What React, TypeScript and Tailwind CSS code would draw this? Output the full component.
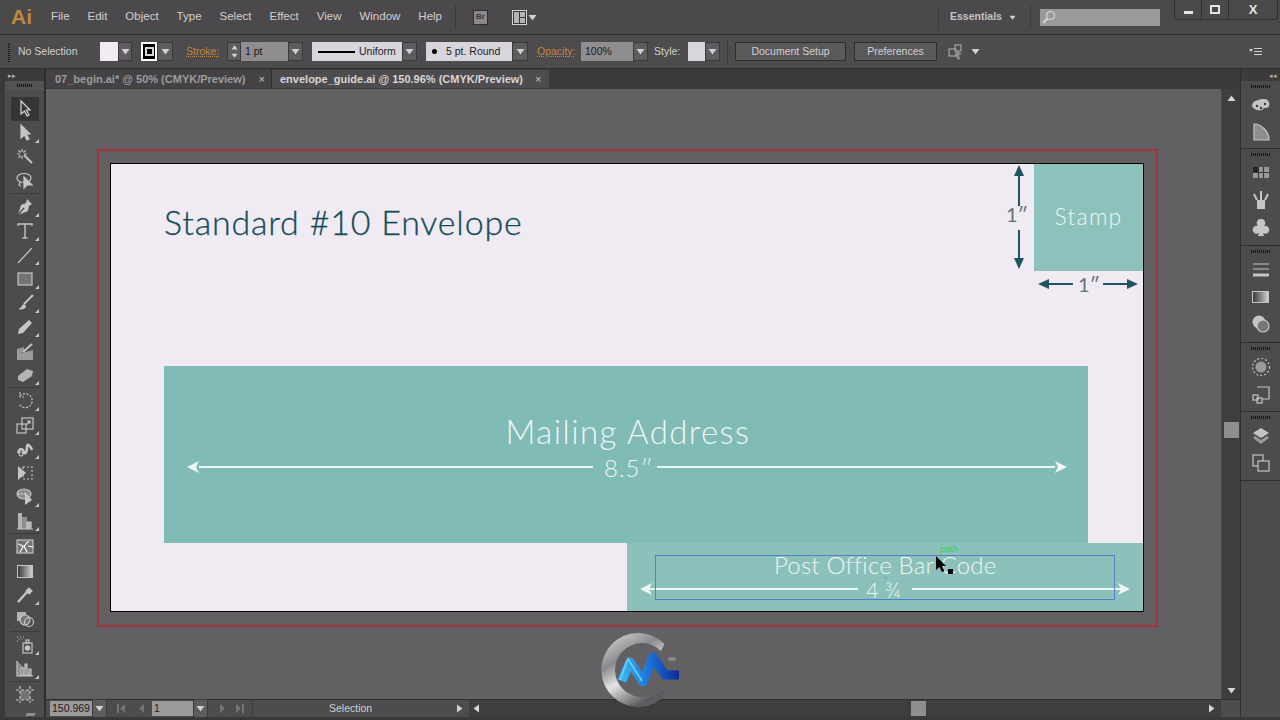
import { ReactNode } from "react";

const Caret = ({ className = "" }: { className?: string }) => (
  <svg width="9" height="7" viewBox="0 0 9 7" className={className}>
    <path d="M0.5 1h8L4.5 6.5z" fill="currentColor" />
  </svg>
);

const DropBtn = ({ className = "w-[15px]" }: { className?: string }) => (
  <div className={`flex h-[19px] shrink-0 items-center justify-center border border-[#3a383a] bg-[#5e5c5e] text-[#d0ced0] ${className}`}>
    <Caret />
  </div>
);

const Grip = () => (
  <div className="h-[3px] w-5 bg-[repeating-linear-gradient(90deg,#161516_0_1px,transparent_1px_2px)]" />
);

const menus = ["File", "Edit", "Object", "Type", "Select", "Effect", "View", "Window", "Help"];

const TitleBar = () => (
  <div className="flex h-[35px] shrink-0 items-center border-b border-[#2f2e2f] bg-[#4b494b] text-[11.5px] text-[#d2d0d2]">
    <div className="ml-[11px] w-[41px] text-[21px] font-bold text-[#c08a3e]">Ai</div>
    <div className="-ml-px flex gap-[18px]">
      {menus.map((m) => (
        <span key={m}>{m}</span>
      ))}
    </div>
    <div className="ml-[13px] h-6 w-px bg-[#3c3a3c]" />
    <div className="ml-[17px] flex h-[15px] w-[15px] items-center justify-center border border-[#2f2e2f] bg-[#8b898b] text-[8px] font-bold text-[#3a383a]">
      Br
    </div>
    <div className="ml-[24px] flex items-center gap-[1px] text-[#d2d0d2]">
      <svg width="15" height="15" viewBox="0 0 15 15">
        <rect x="0.5" y="0.5" width="14" height="14" fill="#3a383a" stroke="#d2d0d2" />
        <rect x="2" y="2" width="5" height="11" fill="#b5b3b5" />
        <rect x="8" y="2" width="5" height="5" fill="#b5b3b5" />
        <rect x="8" y="8" width="5" height="5" fill="#b5b3b5" />
      </svg>
      <Caret />
    </div>
    <div className="ml-auto h-6 w-px bg-[#3c3a3c]" />
    <span className="ml-[11px] w-[51px] whitespace-nowrap text-[10.5px] font-bold text-[#c4c2c4]">Essentials</span>
    <Caret className="ml-[7px] scale-75" />
    <div className="ml-[13px] h-6 w-px bg-[#3c3a3c]" />
    <div className="ml-[9px] flex h-[17px] w-[120px] items-center bg-[#9b999c] pl-[2px] text-[#d8d6d8]">
      <svg width="14" height="14" viewBox="0 0 14 14" fill="none" stroke="currentColor" strokeWidth="1.2">
        <circle cx="8.5" cy="5.5" r="4" />
        <path d="M5.5 8.5L1 13" strokeWidth="2" />
      </svg>
    </div>
    <div className="mb-auto ml-[14px] mr-[2px] flex h-[20px] w-[104px] items-center rounded-b border border-t-0 border-[#2f2e2f] text-[#e4e2e4]">
      <div className="flex h-full w-[27px] items-center justify-center border-r border-[#2f2e2f]">
        <div className="mt-[6px] h-[3px] w-[9px] bg-current" />
      </div>
      <div className="flex h-full w-[27px] items-center justify-center border-r border-[#2f2e2f]">
        <div className="h-[9px] w-[10px] border-2 border-current" />
      </div>
      <div className="flex-1 text-center text-[13px] font-bold leading-[18px]">X</div>
    </div>
  </div>
);

const ControlBar = () => (
  <div className="flex h-[34px] shrink-0 items-center border-b border-[#2f2e2f] bg-[#4d4b4d] text-[10.5px] text-[#d2d0d2]">
    <div className="ml-[8px] h-[20px] w-[2px] bg-[repeating-linear-gradient(0deg,#1b1a1b_0_1px,transparent_1px_2px)]" />
    <span className="ml-[8px] w-[57px] whitespace-nowrap">No Selection</span>
    <div className="ml-[25px] h-[19px] w-[18px] bg-[#f0eaf3]" />
    <DropBtn className="w-[14px]" />
    <div className="ml-[9px] flex h-[19px] w-[16px] items-center justify-center border-2 border-white bg-black">
      <div className="h-[9px] w-[9px] border-2 border-[#d8d6d8]" />
    </div>
    <DropBtn className="w-[16px]" />
    <span className="ml-[13px] w-[34px] text-[#c08a3e] underline decoration-dotted">Stroke:</span>
    <div className="ml-[7px] flex h-[19px] w-[14px] flex-col items-center justify-around border border-[#3a383a] bg-[#5e5c5e] text-[#d0ced0]">
      <Caret className="rotate-180 scale-75" />
      <Caret className="scale-75" />
    </div>
    <div className="flex h-[19px] w-[47px] items-center bg-[#8f8d90] pl-[4px] text-[#1c1b1c]">1 pt</div>
    <DropBtn />
    <div className="ml-[9px] flex h-[19px] w-[90px] items-center bg-[#d9d5dc] pl-[6px] text-[#1c1b1c]">
      <div className="h-[2px] w-[37px] bg-black" />
      <span className="ml-[4px]">Uniform</span>
    </div>
    <DropBtn />
    <div className="ml-[9px] flex h-[19px] w-[86px] items-center bg-[#d9d5dc] pl-[6px] text-[#1c1b1c]">
      <div className="h-[5px] w-[5px] rounded-full bg-black" />
      <span className="ml-[9px] whitespace-nowrap">5 pt. Round</span>
    </div>
    <DropBtn className="w-[16px]" />
    <span className="ml-[9px] w-[38px] text-[#c08a3e] underline decoration-dotted">Opacity:</span>
    <div className="ml-[6px] flex h-[19px] w-[52px] items-center bg-[#8f8d90] pl-[4px] text-[#1c1b1c]">100%</div>
    <DropBtn />
    <span className="ml-[6px] w-[26px]">Style:</span>
    <div className="ml-[8px] h-[19px] w-[17px] bg-[#d9d5dc]" />
    <DropBtn />
    <div className="ml-[7px] h-6 w-px bg-[#3c3a3c]" />
    <div className="ml-[7px] flex h-[19px] w-[111px] items-center justify-center border border-[#2f2e2f] bg-[#5a585a]">
      Document Setup
    </div>
    <div className="ml-[8px] flex h-[19px] w-[83px] items-center justify-center border border-[#2f2e2f] bg-[#5a585a]">
      Preferences
    </div>
    <svg width="16" height="16" viewBox="0 0 16 16" className="ml-[11px] text-[#b5b3b5]">
      <rect x="1" y="5" width="7" height="7" fill="none" stroke="currentColor" />
      <rect x="7" y="1" width="6" height="6" fill="none" stroke="currentColor" />
      <path d="M7 5l7 5-3 1 1 4-2 1-2-4z" fill="#8f8d90" />
    </svg>
    <Caret className="ml-[7px]" />
    <svg width="13" height="9" viewBox="0 0 13 9" className="ml-auto mr-[18px] text-[#d2d0d2]">
      <path d="M0 2h4L2 5z M5 1h8v1H5z M5 4h8v1H5z M5 7h8v1H5z" fill="currentColor" />
    </svg>
  </div>
);

const Ic = ({ children }: { children: ReactNode }) => (
  <svg width="20" height="20" viewBox="0 0 20 20" fill="none" stroke="#c6c4c6" strokeWidth="1.2">
    {children}
  </svg>
);

const toolIcons: { icon: ReactNode; corner?: boolean; sep?: boolean; active?: boolean }[] = [
  { active: true, icon: <path d="M6 2v13l3.5-3 2.5 5 2-1-2.5-5H15z" stroke="#d8d6d8" /> },
  { corner: true, icon: <path d="M6 2v13l3.5-3 2.5 5 2-1-2.5-5H15z" fill="#c6c4c6" /> },
  { icon: <><path d="M9 8l8 8" strokeWidth="2" /><path d="M7 2v3M7 9v3M2 7h3M9 7h3M3.5 3.5l2 2M10.5 3.5l-2 2M3.5 10.5l2-2" /></> },
  { sep: true, icon: <><ellipse cx="9" cy="7" rx="7" ry="4.5" /><path d="M9 6v11l3-3h5z" fill="#c6c4c6" /><path d="M5 11l-1 3 2 1" /></> },
  { corner: true, icon: <><path d="M12 2l5 5-3 2-1 5-10 4 3-10 5-2z" fill="#c6c4c6" stroke="none" /><path d="M3 18l6-7" stroke="#4d4b4d" /></> },
  { corner: true, icon: <path d="M3 5V3h14v2M10 3v14M7.5 17h5" strokeWidth="1.4" /> },
  { corner: true, icon: <path d="M3 18L17 3" /> },
  { corner: true, icon: <rect x="3" y="4" width="14" height="12" fill="#757375" stroke="#c6c4c6" /> },
  { corner: true, icon: <><path d="M18 2L9 11" strokeWidth="2" /><path d="M9 11c-2 0-2 4-6 5 4 1 8 0 8-3z" fill="#c6c4c6" stroke="none" /></> },
  { corner: true, icon: <path d="M14 3l3 3-9 10-5 1 1-5z" fill="#c6c4c6" stroke="none" /> },
  { icon: <><path d="M2 8l7-2v3l-3 3 8-2 4-1v10H2z" fill="#9b999b" stroke="none" /><path d="M8 11l9-8" strokeWidth="2" /></> },
  { sep: true, corner: true, icon: <path d="M3 11l9-7 6 2-1 5-9 6-5-2z" fill="#b5b3b5" stroke="none" /> },
  { corner: true, icon: <path d="M5 5a7 7 0 1 1-1 8M5 1v5h5" strokeDasharray="2 1.5" /> },
  { corner: true, icon: <><rect x="2" y="9" width="9" height="9" /><rect x="7" y="3" width="11" height="11" /><path d="M11 10l4-4M12 6h3v3" /></> },
  { corner: true, icon: <><path d="M3 14c2-6 5-4 6-1s3 0 3-5 4 0 5 3" strokeWidth="2.5" /><circle cx="6" cy="15" r="2" fill="#4d4b4d" /></> },
  { icon: <><path d="M3 3l8 7-8 7z" fill="#c6c4c6" stroke="none" /><rect x="8" y="4" width="9" height="12" strokeDasharray="2 2" /></> },
  { corner: true, icon: <><ellipse cx="9" cy="7" rx="7" ry="5" fill="#8f8d8f" /><path d="M3 7h9" strokeDasharray="1.5 1.5" stroke="#fff" /><path d="M10 5v13l7-5z" fill="#c6c4c6" stroke="none" /></> },
  { sep: true, corner: true, icon: <><path d="M3 2h4v16H3z" fill="#b5b3b5" stroke="none" /><path d="M7 6h5v12H7z" fill="#8f8d8f" stroke="none" /><path d="M12 11h4v7h-4zM2 18h16" fill="#b5b3b5" stroke="#c6c4c6" /></> },
  { icon: <><rect x="2" y="3" width="16" height="13" fill="#757375" /><path d="M3 7c4 0 3 3 6 2s2-5 5-4M9 9l3 6M13 9l5 1M5 15l3-5" stroke="#fff" /></> },
  { icon: null },
  { corner: true, icon: <><path d="M3 17l9-10" strokeWidth="2.5" stroke="#c6c4c6" /><path d="M11 6l3-3 3 3-3 3z" fill="#c6c4c6" /></> },
  { sep: true, icon: <><path d="M2 3h9v9H2z" fill="#b5b3b5" stroke="none" /><circle cx="10" cy="11" r="5" fill="#757375" /><circle cx="14" cy="13" r="4.5" /></> },
  { corner: true, icon: <><rect x="8" y="8" width="9" height="10" /><rect x="11" y="5" width="3" height="3" /><circle cx="12.5" cy="13" r="2.2" fill="#c6c4c6" /><path d="M2 2h1M5 2h1M8 2h1M3.5 4h1M6.5 4h1M2 6h1" /></> },
  { corner: true, sep: true, icon: <path d="M2 2v15h16M6 16V9h2v7zM10 16V5h2v11zM14 16v-6h2v6z" fill="#8f8d8f" /> },
  { icon: <><rect x="5" y="5" width="10" height="10" fill="#757375" stroke="none" /><path d="M5 1v17M15 1v17M1 5h18M1 15h18" strokeDasharray="3 2" /></> },
];

const ToolBar = () => (
  <div className="flex w-[46px] shrink-0 flex-col border-r-2 border-l-[5px] border-r-[#2f2e2f] border-l-[#3a383a] bg-[#4d4b4d]">
    <div className="flex h-[12px] items-center bg-[#3c3b3c] pl-[3px] text-[7px] leading-none text-[#b5b3b5]">▸▸</div>
    <div className="flex h-[9px] items-center justify-center bg-[#545254]">
      <div className="h-[3px] w-4 bg-[repeating-linear-gradient(90deg,#161516_0_1px,transparent_1px_2px)]" />
    </div>
    <div className="flex flex-col items-center pt-[7px]">
      {toolIcons.map((t, i) => (
        <div key={i} className="flex w-full flex-col items-center">
          <div className={`relative flex h-[24px] w-[28px] items-center justify-center ${t.active ? "bg-[#363436]" : ""}`}>
            {t.icon === null ? (
              <div className="h-[13px] w-[16px] border border-[#c6c4c6] bg-gradient-to-r from-[#3f3d3f] to-[#d0ced0]" />
            ) : (
              <Ic>{t.icon}</Ic>
            )}
            {t.corner && (
              <div className="absolute bottom-[2px] right-[0px] h-0 w-0 border-b-[4px] border-l-[4px] border-b-[#c6c4c6] border-l-transparent" />
            )}
          </div>
          {t.sep && <div className="mb-px h-px w-[30px] bg-[#3c3a3c]" />}
        </div>
      ))}
    </div>
    <div className="mb-px ml-[21px] mt-auto h-[3px] w-[9px] -skew-x-[30deg] bg-[#8f8d8f]" />
  </div>
);

const Tabs = () => (
  <div className="flex h-[20px] shrink-0 border-b border-[#3a383a] bg-[#3c3b3c] pt-px text-[11px] font-bold">
    <div className="flex w-[226px] items-center border-r border-[#2f2e2f] bg-[#444244] pl-[9px] text-[#9d9b9d]">
      <span className="whitespace-nowrap">07_begin.ai* @ 50% (CMYK/Preview)</span>
      <span className="ml-[13px] font-normal text-[#c4c2c4]">×</span>
    </div>
    <div className="flex w-[277px] items-center bg-[#4e4c4e] pl-[8px] text-[#d8d6d8]">
      <span className="whitespace-nowrap">envelope_guide.ai @ 150.96% (CMYK/Preview)</span>
      <span className="ml-[12px] font-normal text-[#c4c2c4]">×</span>
    </div>
  </div>
);

const ArrowH = ({ className, color, width }: { className: string; color: string; width: number }) => (
  <svg width={width} height="14" viewBox={`0 0 ${width} 14`} className={`absolute ${className}`}>
    <path d={`M0 7L12 1 9 7 12 13Z M${width} 7L${width - 12} 1 ${width - 9} 7 ${width - 12} 13Z`} fill={color} />
  </svg>
);

const Artboard = () => (
  <div className="relative h-[449px] w-[1034px] overflow-hidden border border-black bg-[#f0eaf3] font-['Lato',sans-serif] font-light">
    <div className="absolute left-[53px] top-[36px] whitespace-nowrap text-[34px] leading-[44px] tracking-[0.8px] text-[#154c5a] [-webkit-text-stroke:0.3px_#154c5a]">
      Standard #10 Envelope
    </div>

    {/* stamp */}
    <div className="absolute left-[923px] top-[-1px] flex h-[108px] w-[109px] items-center justify-center bg-[#8dc1bb] pb-[2px] text-[23px] tracking-[1.2px] text-[#eef6f4]">
      Stamp
    </div>
    <svg width="14" height="104" viewBox="0 0 14 104" className="absolute left-[901px] top-[1px]">
      <path d="M7 0L12 11H8V41H6V11H2Z M7 104L12 93H8V65H6V93H2Z" fill="#1f5563" />
    </svg>
    <div className="absolute left-[895px] top-[38px] text-[20px] font-normal leading-6 text-[#5f7478]">1″</div>
    <svg width="100" height="14" viewBox="0 0 100 14" className="absolute left-[927px] top-[113px]">
      <path d="M0 7L11 2V6H35V8H11V12Z M100 7L89 2V6H65V8H89V12Z" fill="#1f5563" />
    </svg>
    <div className="absolute left-[967px] top-[108px] text-[20px] font-normal leading-6 text-[#5f7478]">1″</div>

    {/* mailing */}
    <div className="absolute left-[53px] top-[202px] h-[177px] w-[924px] bg-[#81bbb5] text-[#eef6f4]">
      <div className="absolute left-[2px] top-[43px] w-full text-center text-[33px] leading-[44px] tracking-[1.4px]">
        Mailing Address
      </div>
      <ArrowH className="left-[23px] top-[94px]" color="#eef6f4" width={880} />
      <div className="absolute left-[35px] top-[100px] h-[2px] w-[394px] bg-[#eef6f4]" />
      <div className="absolute left-[493px] top-[100px] h-[2px] w-[398px] bg-[#eef6f4]" />
      <div className="absolute left-[440px] top-[87px] text-[24px] leading-[30px] tracking-[1px]">8.5″</div>
    </div>

    {/* barcode */}
    <div className="absolute left-[516px] top-[379px] h-[68px] w-[516px] bg-[#8cc0ba] text-[#eef6f4]">
      <div className="absolute left-[147px] top-[12px] whitespace-nowrap text-[24px] leading-5 tracking-[0.2px]">
        Post Office Bar Code
      </div>
      <div className="absolute left-[239px] top-[37px] whitespace-nowrap text-[22px] leading-5">4 ¾</div>
      <ArrowH className="left-[13px] top-[39px]" color="#eef6f4" width={490} />
      <div className="absolute left-[20px] top-[45px] h-[2px] w-[211px] bg-[#eef6f4]" />
      <div className="absolute left-[285px] top-[45px] h-[2px] w-[212px] bg-[#eef6f4]" />
      <div className="absolute left-[28px] top-[12px] h-[45px] w-[460px] border border-[#4f83c4]" />
      <div className="absolute left-[256px] top-[32px] text-[8px] leading-[5px] text-[#4f83c4]">×</div>
      <div className="absolute left-[313px] top-[2px] font-['Liberation_Sans',sans-serif] text-[9px] font-normal leading-[9px] text-[#31d05c]">
        path
      </div>
      <svg width="18" height="20" viewBox="0 0 18 20" className="absolute left-[308px] top-[12px]">
        <path d="M1 1v14l3.5-3 2.5 5 2.5-1-2.5-5H11z" fill="#000" />
        <rect x="13" y="14" width="5" height="5" fill="#000" />
      </svg>
    </div>
  </div>
);

const Logo = () => (
  <svg width="95" height="92" viewBox="0 0 95 92" className="absolute left-[549px] top-[536px]">
    <defs>
      <linearGradient id="ring" x1="0" y1="0" x2="0.5" y2="1">
        <stop offset="0" stopColor="#e0e0e0" />
        <stop offset="0.4" stopColor="#8a898d" />
        <stop offset="0.65" stopColor="#e4e4e4" />
        <stop offset="1" stopColor="#5d5c60" />
      </linearGradient>
      <linearGradient id="nk" x1="0" y1="0" x2="1" y2="0">
        <stop offset="0" stopColor="#38b4f2" />
        <stop offset="0.5" stopColor="#1a6fd8" />
        <stop offset="1" stopColor="#10299a" />
      </linearGradient>
    </defs>
    <path d="M69.5 18.8A37 37 0 1 0 71.6 68.8L67.7 62.4A27 27 0 1 1 66 25.9Z" fill="url(#ring)" />
    <path d="M27 56L35 37 48 57 58 32 70 50H84" fill="none" stroke="url(#nk)" strokeWidth="9" strokeLinejoin="round" />
    <path d="M25 55L33 34 47 56" fill="none" stroke="#6fd0fa" strokeWidth="1.5" />
    <ellipse cx="77" cy="34" rx="4" ry="2" fill="#8a898c" />
  </svg>
);

const ScrollV = () => (
  <div className="flex w-[19px] shrink-0 flex-col items-center border-l border-[#4a484a] bg-[#3f3e3f] text-[#d8d6d8]">
    <Caret className="mt-[6px] rotate-180" />
    <div className="mt-[320px] h-[16px] w-[15px] bg-[#8f8d90]" />
    <Caret className="mb-[5px] mt-auto" />
  </div>
);

const Skip = ({ dir, bar }: { dir: "l" | "r"; bar?: boolean }) => (
  <svg width="10" height="9" viewBox="0 0 10 9" className="text-[#767476]">
    {dir === "l" ? (
      <path d={bar ? "M1 0h2v9H1zM9 0v9L4 4.5z" : "M8 0v9L3 4.5z"} fill="currentColor" />
    ) : (
      <path d={bar ? "M7 0h2v9H7zM1 0v9l5-4.5z" : "M2 0v9l5-4.5z"} fill="currentColor" />
    )}
  </svg>
);

const StatusBar = () => (
  <div className="flex h-[18px] shrink-0 items-center border-t border-[#2f2e2f] bg-[#4d4b4d] text-[10.5px] text-[#d2d0d2]">
    <div className="ml-[4px] flex h-[15px] w-[42px] items-center bg-[#9b999c] pl-[2px] text-[#1c1b1c]">150.969</div>
    <DropBtn />
    <div className="ml-[9px] flex w-[30px] justify-between">
      <Skip dir="l" bar />
      <Skip dir="l" />
    </div>
    <div className="ml-[6px] flex h-[15px] w-[41px] items-center bg-[#9b999c] pl-[2px] text-[#1c1b1c]">1</div>
    <DropBtn />
    <div className="ml-[10px] flex w-[27px] justify-between">
      <Skip dir="r" />
      <Skip dir="r" bar />
    </div>
    <div className="ml-[7px] h-full w-px bg-[#3c3a3c]" />
    <div className="ml-[76px] w-[42px] whitespace-nowrap">Selection</div>
    <Caret className="ml-[84px] -rotate-90 text-[#d2d0d2]" />
    <div className="ml-[5px] mr-[19px] flex h-full flex-1 items-center bg-[#3f3e3f] pl-[3px] text-[#d8d6d8]">
      <Caret className="rotate-90" />
      <div className="ml-[430px] h-[15px] w-[15px] bg-[#8f8d90]" />
      <Caret className="ml-auto mr-[5px] -rotate-90" />
    </div>
  </div>
);

const PanelGroup = ({ children, pb = "pb-[6px]" }: { children: ReactNode; pb?: string }) => (
  <div className={`flex flex-col items-center gap-[7px] border-b border-[#2f2e2f] pt-[4px] ${pb}`}>
    <Grip />
    {children}
  </div>
);

const P = ({ children }: { children: ReactNode }) => (
  <svg width="20" height="20" viewBox="0 0 20 20" fill="none" stroke="#c6c4c6" strokeWidth="1.2">
    {children}
  </svg>
);

const RightDock = () => (
  <div className="flex w-[40px] shrink-0 flex-col border-l border-[#2f2e2f] bg-[#4d4b4d]">
    <div className="flex h-[12px] items-center justify-end bg-[#3c3b3c] pr-[3px] text-[7px] leading-none text-[#b5b3b5]">◂◂</div>
    <PanelGroup>
      <P><path d="M1 11c0-5 7-7 12-7s6 4 5 7-5 1-6 3-9 2-11-3z" fill="#c6c4c6" stroke="none" /><circle cx="6" cy="11" r="1.2" fill="#3a383a" stroke="none" /><circle cx="10" cy="13" r="1.2" fill="#3a383a" stroke="none" /><circle cx="14" cy="9" r="1.2" fill="#3a383a" stroke="none" /></P>
      <P><path d="M3 2v16h15C18 10 11 2 3 2z" fill="#8f8d8f" /></P>
    </PanelGroup>
    <PanelGroup pb="pb-[8px]">
      <P><rect x="2" y="4" width="16" height="11" fill="#9b999b" stroke="none" /><path d="M7.5 4v11M12.5 4v11M2 9.5h16" stroke="#3a383a" /><rect x="2" y="4" width="5" height="5" fill="#222" stroke="none" /></P>
      <P><path d="M6 10h8v9H6z" fill="#c6c4c6" stroke="none" /><path d="M10 10V1M6 10L3 4M14 10l3-6" strokeWidth="2" /></P>
      <P><path d="M10 2a4 4 0 0 1 3 7 4 4 0 1 1-1 7l1 3H7l1-3a4 4 0 1 1-1-7 4 4 0 0 1 3-7z" fill="#c6c4c6" stroke="none" /></P>
    </PanelGroup>
    <PanelGroup pb="pb-[8px]">
      <P><path d="M2 4h16M2 9h16" /><path d="M2 15h16" strokeWidth="3" /></P>
      <div className="my-[4px] h-[12px] w-[17px] border border-[#c6c4c6] bg-gradient-to-r from-[#3f3d3f] to-[#d0ced0]" />
      <P><circle cx="8" cy="8" r="6.5" fill="#c6c4c6" stroke="none" /><circle cx="12" cy="12" r="6" fill="#777577" /></P>
    </PanelGroup>
    <PanelGroup pb="pb-[7px]">
      <P><circle cx="10" cy="10" r="5.5" fill="#9b999b" stroke="none" /><circle cx="10" cy="10" r="8.5" strokeDasharray="2 2" /></P>
      <P><path d="M6 3h12v12H11" /><rect x="2" y="11" width="5" height="5" /><rect x="6" y="14" width="5" height="5" /></P>
    </PanelGroup>
    <PanelGroup pb="pb-[7px]">
      <P><path d="M10 2l8 5-8 5-8-5z" fill="#c6c4c6" stroke="none" /><path d="M4 10l6 4 6-4 2 2-8 6-8-6z" fill="#9b999b" stroke="none" /></P>
      <P><rect x="2" y="2" width="10" height="11" /><rect x="7" y="8" width="11" height="10" fill="#4d4b4d" /></P>
    </PanelGroup>
  </div>
);

export default function App() {
  return (
    <div className="flex h-[720px] w-[1280px] flex-col overflow-hidden bg-[#3a383a] font-['Liberation_Sans',sans-serif]">
      <TitleBar />
      <ControlBar />
      <div className="flex min-h-0 flex-1 border-b-[3px] border-[#3a383a]">
        <ToolBar />
        <div className="flex min-w-0 flex-1 flex-col">
          <Tabs />
          <div className="flex min-h-0 flex-1">
            <div className="relative flex-1 bg-[#626063] pl-[51px] pt-[60px]">
              <div className="h-[478px] w-[1061px] border-2 border-[#a8323a] pl-[11px] pt-[12px]">
                <Artboard />
              </div>
              <Logo />
            </div>
            <ScrollV />
          </div>
          <StatusBar />
        </div>
        <RightDock />
      </div>
    </div>
  );
}
